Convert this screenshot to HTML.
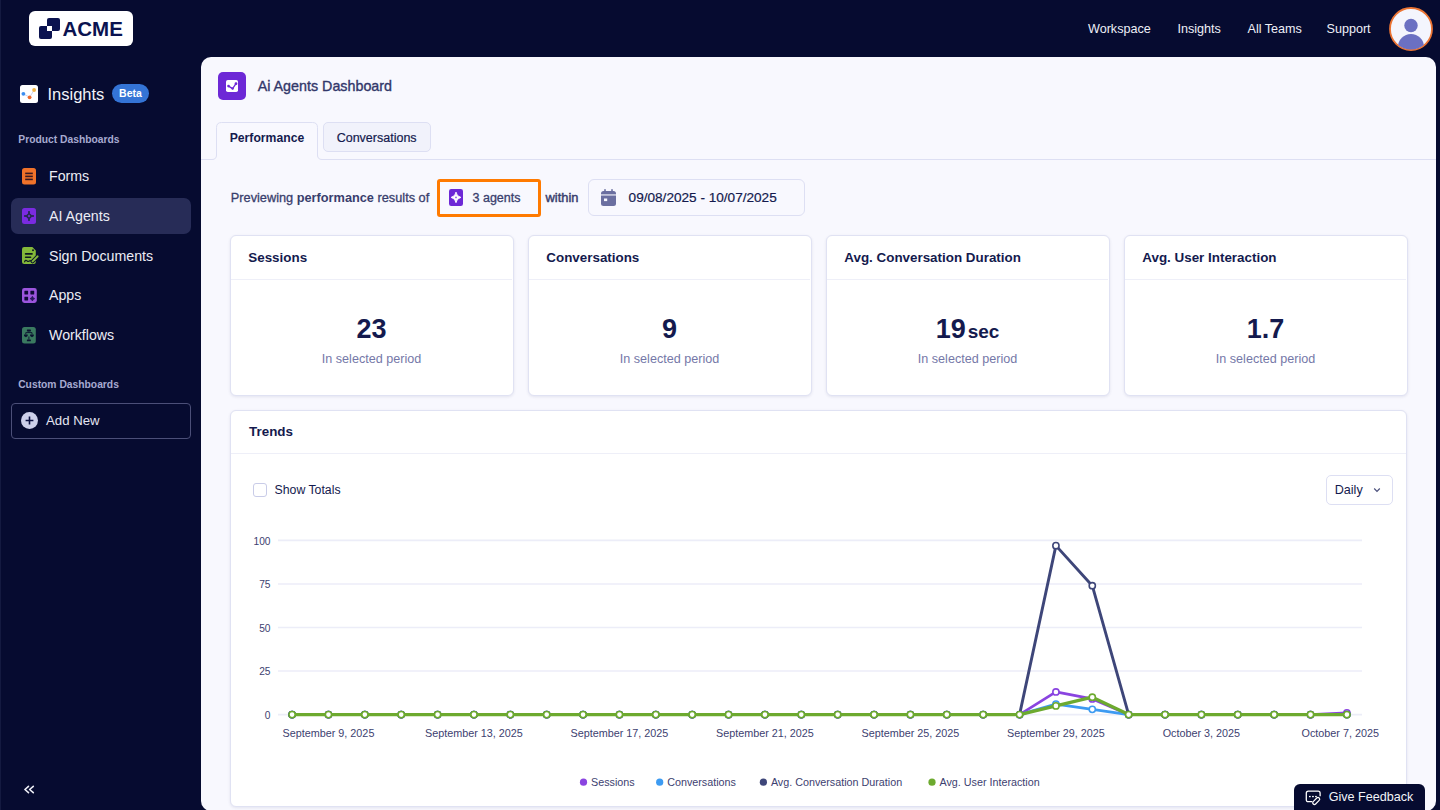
<!DOCTYPE html><html><head><meta charset="utf-8"><style>
html,body{margin:0;padding:0;}
body{width:1440px;height:810px;overflow:hidden;background:#060B30;font-family:"Liberation Sans",sans-serif;position:relative;}
.t{position:absolute;white-space:nowrap;}
.r{position:absolute;box-sizing:border-box;}
svg{position:absolute;overflow:visible;}
</style></head><body>
<div class="r" style="left:0px;top:0px;width:1px;height:810px;background:#141A40;"></div>
<div class="r" style="left:29px;top:11px;width:104px;height:35px;background:#fff;border-radius:6px;"></div>
<div class="r" style="left:39px;top:26px;width:13px;height:13px;background:#0B1350;border-radius:2px;"></div>
<div class="r" style="left:47px;top:18px;width:13px;height:13px;background:#0B1350;border-radius:2px;"></div>
<div class="r" style="left:47px;top:26px;width:5px;height:5px;background:#fff;"></div>
<div class="t " style="left:62.5px;top:18.57px;font-size:20.5px;line-height:20.5px;color:#0B1350;font-weight:bold;letter-spacing:0px;">ACME</div>
<div class="t " style="left:1088px;top:23.29px;font-size:12.6px;line-height:12.6px;color:#EEEFF7;font-weight:normal;">Workspace</div>
<div class="t " style="left:1177.5px;top:23.29px;font-size:12.6px;line-height:12.6px;color:#EEEFF7;font-weight:normal;">Insights</div>
<div class="t " style="left:1247.5px;top:23.29px;font-size:12.6px;line-height:12.6px;color:#EEEFF7;font-weight:normal;">All Teams</div>
<div class="t " style="left:1326.5px;top:23.29px;font-size:12.6px;line-height:12.6px;color:#EEEFF7;font-weight:normal;">Support</div>
<svg style="left:1389px;top:7px" width="44" height="44" viewBox="0 0 44 44">
<defs><clipPath id="avc"><circle cx="22" cy="22" r="20.5"/></clipPath></defs>
<circle cx="22" cy="22" r="21" fill="#F4F5FD" stroke="#EC7433" stroke-width="1.8"/>
<g clip-path="url(#avc)"><circle cx="22" cy="18.5" r="6.7" fill="#6B70C2"/>
<ellipse cx="22" cy="40" rx="13" ry="13" fill="#6B70C2"/></g>
</svg>
<svg style="left:20px;top:85px" width="18" height="18" viewBox="0 0 18 18">
<rect x="0" y="0" width="18" height="18" rx="2.5" fill="#fff"/>
<polyline points="3.4,8.8 9.6,12.3 14.1,5" fill="none" stroke="#C9CBE6" stroke-width="0.9"/>
<circle cx="3.4" cy="8.8" r="1.9" fill="#3B8EF0"/><circle cx="9.6" cy="12.3" r="1.9" fill="#EE6A2C"/><circle cx="14.1" cy="5" r="1.9" fill="#F0B445"/>
</svg>
<div class="t " style="left:47.5px;top:85.97px;font-size:16.5px;line-height:16.5px;color:#F1F2F8;font-weight:normal;">Insights</div>
<div class="r" style="left:112px;top:84px;width:37px;height:19px;background:#3474D6;border-radius:10px;"></div>
<div class="t" style="left:-69.5px;width:400px;text-align:center;top:88.38px;font-size:10.5px;line-height:10.5px;color:#fff;font-weight:bold;">Beta</div>
<div class="t " style="left:18.3px;top:134.94px;font-size:10.3px;line-height:10.3px;color:#A7AAD0;font-weight:bold;">Product Dashboards</div>
<div class="r" style="left:11px;top:198px;width:180px;height:36px;background:#272C57;border-radius:7px;"></div>
<div class="t " style="left:49px;top:169.43px;font-size:14.2px;line-height:14.2px;color:#ECEDF5;font-weight:normal;">Forms</div>
<div class="t " style="left:49px;top:208.93px;font-size:14.2px;line-height:14.2px;color:#ECEDF5;font-weight:normal;">AI Agents</div>
<div class="t " style="left:49px;top:248.93px;font-size:14.2px;line-height:14.2px;color:#ECEDF5;font-weight:normal;">Sign Documents</div>
<div class="t " style="left:49px;top:288.23px;font-size:14.2px;line-height:14.2px;color:#ECEDF5;font-weight:normal;">Apps</div>
<div class="t " style="left:49px;top:328.23px;font-size:14.2px;line-height:14.2px;color:#ECEDF5;font-weight:normal;">Workflows</div>
<svg style="left:22px;top:168px" width="14" height="17" viewBox="0 0 14 17">
<rect width="14" height="16.6" rx="2.5" fill="#F0722A"/>
<rect x="3.2" y="4.6" width="7.6" height="1.6" fill="#3A1A22"/><rect x="3.2" y="7.6" width="7.6" height="1.6" fill="#3A1A22"/><rect x="3.2" y="10.6" width="7.6" height="1.6" fill="#3A1A22"/>
</svg>
<svg style="left:22px;top:208px" width="14" height="16" viewBox="0 0 14 16">
<rect width="14" height="16" rx="2.5" fill="#7A2BE0"/>
<rect x="2.1" y="7.1" width="9.8" height="1.8" fill="#232A4E"/><rect x="6.1" y="3.1" width="1.8" height="9.8" fill="#232A4E"/>
<circle cx="7" cy="8" r="2.6" fill="#232A4E"/><circle cx="7" cy="8" r="1.2" fill="#6E2BC8"/>
</svg>
<svg style="left:22px;top:247px" width="17" height="18" viewBox="0 0 17 18">
<path d="M2.2 0 H10.4 L13.8 3.4 V15 Q13.8 17.1 11.7 17.1 H2.2 Q0 17.1 0 15 V2.2 Q0 0 2.2 0Z" fill="#84B83A"/>
<circle cx="11" cy="3.3" r="1" fill="#0E1A20"/>
<rect x="2.8" y="6" width="8" height="1.7" rx="0.8" fill="#0E1A20"/>
<rect x="2.8" y="9.4" width="6.6" height="1.7" rx="0.8" fill="#0E1A20"/>
<path d="M2.6 14.8 Q3.6 12.4 5 13.8 Q6.4 15.2 8 13.6 L9.6 14.6" fill="none" stroke="#0E1A20" stroke-width="1.2" stroke-linecap="round"/>
<line x1="15.6" y1="9.4" x2="10.6" y2="14.4" stroke="#0B1230" stroke-width="3.8" stroke-linecap="round"/>
<line x1="15.6" y1="9.4" x2="10.6" y2="14.4" stroke="#84B83A" stroke-width="2" stroke-linecap="round"/>
</svg>
<svg style="left:21.7px;top:287.7px" width="15" height="15" viewBox="0 0 15 15">
<rect width="14.8" height="15" rx="2.4" fill="#9B55DD"/>
<rect x="2.4" y="2.7" width="3.7" height="3.7" rx="0.4" fill="#0D0A35"/><rect x="8.4" y="2.7" width="3.8" height="3.7" rx="0.4" fill="#0D0A35"/><rect x="2.4" y="8.7" width="3.7" height="3.8" rx="0.4" fill="#0D0A35"/>
<path d="M10.4 8.7 Q10.8 10.2 12.3 10.6 Q10.8 11 10.4 12.5 Q10 11 8.5 10.6 Q10 10.2 10.4 8.7Z" fill="#2A1A5E" stroke="#2A1A5E" stroke-width="1.2" stroke-linejoin="round"/>
</svg>
<svg style="left:22px;top:326.6px" width="14" height="17" viewBox="0 0 14 17">
<rect width="13.8" height="16.5" rx="2.5" fill="#3A7A60"/>
<rect x="4.9" y="2.5" width="4" height="1.9" rx="0.5" fill="#0B1230"/>
<rect x="4.9" y="12.5" width="4" height="1.8" rx="0.5" fill="#0B1230"/>
<path d="M6.9 4.4 V5.6 M3.8 7.4 V5.6 H10 V7.4 M6.9 9.5 V12.5" stroke="#0B1230" stroke-width="0.9" fill="none"/>
<path d="M2 7.4 H5.7 V9 L3.9 10.3 L2 9Z" fill="#0B1230"/><path d="M8.1 7.4 H11.8 V9 L10 10.3 L8.1 9Z" fill="#0B1230"/>
</svg>
<div class="t " style="left:18.2px;top:379.94px;font-size:10.3px;line-height:10.3px;color:#A7AAD0;font-weight:bold;">Custom Dashboards</div>
<div class="r" style="left:11px;top:403px;width:180px;height:36px;border:1px solid #4B4F78;border-radius:4px;"></div>
<svg style="left:21px;top:412px" width="17" height="17" viewBox="0 0 17 17">
<circle cx="8.5" cy="8.5" r="8.5" fill="#CDD0EA"/><path d="M8.5 4.6 V12.4 M4.6 8.5 H12.4" stroke="#0B1040" stroke-width="1.6"/>
</svg>
<div class="t " style="left:46px;top:414.38px;font-size:13.2px;line-height:13.2px;color:#E4E5F2;font-weight:normal;">Add New</div>
<svg style="left:20px;top:782px" width="20" height="16" viewBox="0 0 20 16"><path d="M8.5 4.3 L4.9 7.5 L8.5 10.7 M13.3 4.3 L9.6 7.5 L13.3 10.7" fill="none" stroke="#EDEEF6" stroke-width="1.6" stroke-linecap="round" stroke-linejoin="round"/></svg>
<div class="r" style="left:201px;top:57px;width:1235px;height:754px;background:#F8F8FE;border-radius:10px;"></div>
<svg style="left:218px;top:72px" width="28" height="28" viewBox="0 0 28 28">
<rect width="28" height="28" rx="5" fill="#6D28D6"/>
<rect x="8" y="8" width="12" height="12" rx="1.8" fill="#fff"/>
<polyline points="10.5,14.1 14.6,16.6 18,11.7" fill="none" stroke="#6D28D6" stroke-width="1.3" stroke-linecap="round" stroke-linejoin="round"/>
<circle cx="10.5" cy="14.1" r="1.3" fill="#6D28D6"/><circle cx="14.6" cy="16.6" r="1.2" fill="#6D28D6"/><circle cx="18" cy="11.7" r="1.4" fill="#6D28D6"/>
</svg>
<div class="t " style="left:257.7px;top:79.05px;font-size:14.3px;line-height:14.3px;color:#32376A;font-weight:normal;-webkit-text-stroke:0.35px #32376A;">Ai Agents Dashboard</div>
<svg style="left:0;top:0" width="1440" height="200" viewBox="0 0 1440 200"><path d="M201 159.5 H212 Q216.5 159.5 216.5 155 V127.5 Q216.5 122.5 221.5 122.5 H312.5 Q317.5 122.5 317.5 127.5 V155 Q317.5 159.5 322 159.5 H1436" fill="none" stroke="#DDDFF3" stroke-width="1"/></svg>
<div class="t " style="left:229.7px;top:131.63px;font-size:12.2px;line-height:12.2px;color:#141A4E;font-weight:bold;">Performance</div>
<div class="r" style="left:323px;top:122px;width:108px;height:30px;background:#F1F2FB;border:1px solid #DDDFF3;border-radius:5px;"></div>
<div class="t " style="left:336.7px;top:131.97px;font-size:12.5px;line-height:12.5px;color:#141A4E;font-weight:normal;-webkit-text-stroke:0.2px #141A4E;">Conversations</div>
<div class="t " style="left:230.8px;top:191.56px;font-size:12.75px;line-height:12.75px;color:#393E6D;font-weight:normal;"><span style="-webkit-text-stroke:0.3px #393E6D">Previewing</span> <b>performance</b> <span style="-webkit-text-stroke:0.3px #393E6D">results of</span></div>
<div class="r" style="left:437px;top:178.5px;width:104px;height:38.5px;border:3.8px solid #FF7A00;border-radius:3px;background:#F8F8FE;"></div>
<svg style="left:449px;top:189px" width="14" height="17" viewBox="0 0 14 17">
<rect width="14" height="17" rx="2.2" fill="#6D28D6"/>
<path d="M7 3.1 Q7.5 7.3 11.9 8.4 Q7.5 9.5 7 13.7 Q6.5 9.5 2.1 8.4 Q6.5 7.3 7 3.1Z" fill="#fff" stroke="#fff" stroke-width="0.9" stroke-linejoin="round"/>
<circle cx="7" cy="8.4" r="0.9" fill="#8E5BE3"/>
</svg>
<div class="t " style="left:472.5px;top:192.38px;font-size:12.5px;line-height:12.5px;color:#393E6D;font-weight:normal;-webkit-text-stroke:0.3px #393E6D;">3 agents</div>
<div class="t " style="left:545.5px;top:191.63px;font-size:12.9px;line-height:12.9px;color:#393E6D;font-weight:normal;-webkit-text-stroke:0.45px #393E6D;">within</div>
<div class="r" style="left:588px;top:179px;width:217px;height:37px;border:1px solid #DDDFF3;border-radius:6px;background:#F8F8FE;"></div>
<svg style="left:601px;top:189px" width="15" height="17" viewBox="0 0 15 17">
<rect x="0" y="2" width="15" height="15" rx="2.5" fill="#6B6FA0"/>
<rect x="3.2" y="0" width="1.6" height="4" rx="0.8" fill="#6B6FA0"/><rect x="10.2" y="0" width="1.6" height="4" rx="0.8" fill="#6B6FA0"/>
<rect x="0" y="5.4" width="15" height="1.1" fill="#F8F8FE"/>
<rect x="3" y="9.5" width="3.2" height="2.6" fill="#F8F8FE"/>
</svg>
<div class="t " style="left:628.6px;top:190.84px;font-size:13.6px;line-height:13.6px;color:#141A4E;font-weight:normal;-webkit-text-stroke:0.2px #141A4E;">09/08/2025 - 10/07/2025</div>
<div class="r" style="left:230px;top:235px;width:284px;height:161px;background:#fff;border:1px solid #E0E2F3;border-radius:6px;box-shadow:0 1px 3px rgba(40,45,110,0.10);"></div>
<div class="r" style="left:231px;top:279px;width:281px;height:1px;background:#EEEFF8;"></div>
<div class="t " style="left:248.3px;top:251.41px;font-size:13.4px;line-height:13.4px;color:#141A4E;font-weight:bold;">Sessions</div>
<div class="t" style="left:171.5px;width:400px;text-align:center;top:315.80px;font-size:27px;line-height:27px;color:#141A4E;font-weight:bold;">23</div>
<div class="t" style="left:171.5px;width:400px;text-align:center;top:352.99px;font-size:12.6px;line-height:12.6px;color:#7578A8;font-weight:normal;">In selected period</div>
<div class="r" style="left:528px;top:235px;width:284px;height:161px;background:#fff;border:1px solid #E0E2F3;border-radius:6px;box-shadow:0 1px 3px rgba(40,45,110,0.10);"></div>
<div class="r" style="left:529px;top:279px;width:281px;height:1px;background:#EEEFF8;"></div>
<div class="t " style="left:546.3px;top:251.41px;font-size:13.4px;line-height:13.4px;color:#141A4E;font-weight:bold;">Conversations</div>
<div class="t" style="left:469.5px;width:400px;text-align:center;top:315.80px;font-size:27px;line-height:27px;color:#141A4E;font-weight:bold;">9</div>
<div class="t" style="left:469.5px;width:400px;text-align:center;top:352.99px;font-size:12.6px;line-height:12.6px;color:#7578A8;font-weight:normal;">In selected period</div>
<div class="r" style="left:826px;top:235px;width:284px;height:161px;background:#fff;border:1px solid #E0E2F3;border-radius:6px;box-shadow:0 1px 3px rgba(40,45,110,0.10);"></div>
<div class="r" style="left:827px;top:279px;width:281px;height:1px;background:#EEEFF8;"></div>
<div class="t " style="left:844.3px;top:251.41px;font-size:13.4px;line-height:13.4px;color:#141A4E;font-weight:bold;">Avg. Conversation Duration</div>
<div class="t" style="left:767.5px;width:400px;text-align:center;top:315.80px;font-size:27px;line-height:27px;color:#141A4E;font-weight:bold;">19<span style="font-size:19px;margin-left:2px">sec</span></div>
<div class="t" style="left:767.5px;width:400px;text-align:center;top:352.99px;font-size:12.6px;line-height:12.6px;color:#7578A8;font-weight:normal;">In selected period</div>
<div class="r" style="left:1124px;top:235px;width:284px;height:161px;background:#fff;border:1px solid #E0E2F3;border-radius:6px;box-shadow:0 1px 3px rgba(40,45,110,0.10);"></div>
<div class="r" style="left:1125px;top:279px;width:281px;height:1px;background:#EEEFF8;"></div>
<div class="t " style="left:1142.3px;top:251.41px;font-size:13.4px;line-height:13.4px;color:#141A4E;font-weight:bold;">Avg. User Interaction</div>
<div class="t" style="left:1065.5px;width:400px;text-align:center;top:315.80px;font-size:27px;line-height:27px;color:#141A4E;font-weight:bold;">1.7</div>
<div class="t" style="left:1065.5px;width:400px;text-align:center;top:352.99px;font-size:12.6px;line-height:12.6px;color:#7578A8;font-weight:normal;">In selected period</div>
<div class="r" style="left:230px;top:410px;width:1177px;height:397px;background:#fff;border:1px solid #E0E2F3;border-radius:6px;box-shadow:0 1px 3px rgba(40,45,110,0.10);"></div>
<div class="r" style="left:231px;top:453px;width:1175px;height:1px;background:#EEEFF8;"></div>
<div class="t " style="left:249.1px;top:425.11px;font-size:13.4px;line-height:13.4px;color:#141A4E;font-weight:bold;">Trends</div>
<div class="r" style="left:252.5px;top:482.5px;width:14px;height:14px;border:1px solid #C9CCE8;border-radius:3px;background:#fff;"></div>
<div class="t " style="left:274.5px;top:483.94px;font-size:12.3px;line-height:12.3px;color:#141A4E;font-weight:normal;">Show Totals</div>
<div class="r" style="left:1326px;top:475px;width:67px;height:30px;border:1px solid #DDDFF3;border-radius:5px;background:#fff;"></div>
<div class="t " style="left:1334.7px;top:484.29px;font-size:12.6px;line-height:12.6px;color:#141A4E;font-weight:normal;">Daily</div>
<svg style="left:1373px;top:487px" width="8" height="6" viewBox="0 0 8 6"><polyline points="1.2,1.5 4,4.3 6.8,1.5" fill="none" stroke="#4A4F7C" stroke-width="1.2"/></svg>
<svg style="left:0;top:0" width="1440" height="810" viewBox="0 0 1440 810">
<line x1="278" y1="714.60" x2="1362" y2="714.60" stroke="#ECEDF8" stroke-width="1.6"/>
<text x="270.5" y="718.70" text-anchor="end" font-family="Liberation Sans" font-size="10.2" fill="#3D4170">0</text>
<line x1="278" y1="671.05" x2="1362" y2="671.05" stroke="#ECEDF8" stroke-width="1.6"/>
<text x="270.5" y="675.15" text-anchor="end" font-family="Liberation Sans" font-size="10.2" fill="#3D4170">25</text>
<line x1="278" y1="627.50" x2="1362" y2="627.50" stroke="#ECEDF8" stroke-width="1.6"/>
<text x="270.5" y="631.60" text-anchor="end" font-family="Liberation Sans" font-size="10.2" fill="#3D4170">50</text>
<line x1="278" y1="583.95" x2="1362" y2="583.95" stroke="#ECEDF8" stroke-width="1.6"/>
<text x="270.5" y="588.05" text-anchor="end" font-family="Liberation Sans" font-size="10.2" fill="#3D4170">75</text>
<line x1="278" y1="540.40" x2="1362" y2="540.40" stroke="#ECEDF8" stroke-width="1.6"/>
<text x="270.5" y="544.50" text-anchor="end" font-family="Liberation Sans" font-size="10.2" fill="#3D4170">100</text>
<text x="328.47" y="736.8" text-anchor="middle" font-family="Liberation Sans" font-size="10.8" fill="#3D4170">September 9, 2025</text>
<text x="473.96" y="736.8" text-anchor="middle" font-family="Liberation Sans" font-size="10.8" fill="#3D4170">September 13, 2025</text>
<text x="619.45" y="736.8" text-anchor="middle" font-family="Liberation Sans" font-size="10.8" fill="#3D4170">September 17, 2025</text>
<text x="764.94" y="736.8" text-anchor="middle" font-family="Liberation Sans" font-size="10.8" fill="#3D4170">September 21, 2025</text>
<text x="910.43" y="736.8" text-anchor="middle" font-family="Liberation Sans" font-size="10.8" fill="#3D4170">September 25, 2025</text>
<text x="1055.92" y="736.8" text-anchor="middle" font-family="Liberation Sans" font-size="10.8" fill="#3D4170">September 29, 2025</text>
<text x="1201.41" y="736.8" text-anchor="middle" font-family="Liberation Sans" font-size="10.8" fill="#3D4170">October 3, 2025</text>
<text x="1379" y="736.8" text-anchor="end" font-family="Liberation Sans" font-size="10.8" fill="#3D4170">October 7, 2025</text>
<polyline points="292.10,714.60 328.47,714.60 364.84,714.60 401.22,714.60 437.59,714.60 473.96,714.60 510.33,714.60 546.71,714.60 583.08,714.60 619.45,714.60 655.82,714.60 692.20,714.60 728.57,714.60 764.94,714.60 801.31,714.60 837.69,714.60 874.06,714.60 910.43,714.60 946.80,714.60 983.18,714.60 1019.55,714.60 1055.92,691.95 1092.29,698.92 1128.67,714.60 1165.04,714.60 1201.41,714.60 1237.78,714.60 1274.16,714.60 1310.53,714.60 1346.90,712.86" fill="none" stroke="#8A44E0" stroke-width="2.7" stroke-linejoin="round"/>
<circle cx="292.10" cy="714.60" r="3.1" fill="#fff" stroke="#8A44E0" stroke-width="1.6"/>
<circle cx="328.47" cy="714.60" r="3.1" fill="#fff" stroke="#8A44E0" stroke-width="1.6"/>
<circle cx="364.84" cy="714.60" r="3.1" fill="#fff" stroke="#8A44E0" stroke-width="1.6"/>
<circle cx="401.22" cy="714.60" r="3.1" fill="#fff" stroke="#8A44E0" stroke-width="1.6"/>
<circle cx="437.59" cy="714.60" r="3.1" fill="#fff" stroke="#8A44E0" stroke-width="1.6"/>
<circle cx="473.96" cy="714.60" r="3.1" fill="#fff" stroke="#8A44E0" stroke-width="1.6"/>
<circle cx="510.33" cy="714.60" r="3.1" fill="#fff" stroke="#8A44E0" stroke-width="1.6"/>
<circle cx="546.71" cy="714.60" r="3.1" fill="#fff" stroke="#8A44E0" stroke-width="1.6"/>
<circle cx="583.08" cy="714.60" r="3.1" fill="#fff" stroke="#8A44E0" stroke-width="1.6"/>
<circle cx="619.45" cy="714.60" r="3.1" fill="#fff" stroke="#8A44E0" stroke-width="1.6"/>
<circle cx="655.82" cy="714.60" r="3.1" fill="#fff" stroke="#8A44E0" stroke-width="1.6"/>
<circle cx="692.20" cy="714.60" r="3.1" fill="#fff" stroke="#8A44E0" stroke-width="1.6"/>
<circle cx="728.57" cy="714.60" r="3.1" fill="#fff" stroke="#8A44E0" stroke-width="1.6"/>
<circle cx="764.94" cy="714.60" r="3.1" fill="#fff" stroke="#8A44E0" stroke-width="1.6"/>
<circle cx="801.31" cy="714.60" r="3.1" fill="#fff" stroke="#8A44E0" stroke-width="1.6"/>
<circle cx="837.69" cy="714.60" r="3.1" fill="#fff" stroke="#8A44E0" stroke-width="1.6"/>
<circle cx="874.06" cy="714.60" r="3.1" fill="#fff" stroke="#8A44E0" stroke-width="1.6"/>
<circle cx="910.43" cy="714.60" r="3.1" fill="#fff" stroke="#8A44E0" stroke-width="1.6"/>
<circle cx="946.80" cy="714.60" r="3.1" fill="#fff" stroke="#8A44E0" stroke-width="1.6"/>
<circle cx="983.18" cy="714.60" r="3.1" fill="#fff" stroke="#8A44E0" stroke-width="1.6"/>
<circle cx="1019.55" cy="714.60" r="3.1" fill="#fff" stroke="#8A44E0" stroke-width="1.6"/>
<circle cx="1055.92" cy="691.95" r="3.1" fill="#fff" stroke="#8A44E0" stroke-width="1.6"/>
<circle cx="1092.29" cy="698.92" r="3.1" fill="#fff" stroke="#8A44E0" stroke-width="1.6"/>
<circle cx="1128.67" cy="714.60" r="3.1" fill="#fff" stroke="#8A44E0" stroke-width="1.6"/>
<circle cx="1165.04" cy="714.60" r="3.1" fill="#fff" stroke="#8A44E0" stroke-width="1.6"/>
<circle cx="1201.41" cy="714.60" r="3.1" fill="#fff" stroke="#8A44E0" stroke-width="1.6"/>
<circle cx="1237.78" cy="714.60" r="3.1" fill="#fff" stroke="#8A44E0" stroke-width="1.6"/>
<circle cx="1274.16" cy="714.60" r="3.1" fill="#fff" stroke="#8A44E0" stroke-width="1.6"/>
<circle cx="1310.53" cy="714.60" r="3.1" fill="#fff" stroke="#8A44E0" stroke-width="1.6"/>
<circle cx="1346.90" cy="712.86" r="3.1" fill="#fff" stroke="#8A44E0" stroke-width="1.6"/>
<polyline points="292.10,714.60 328.47,714.60 364.84,714.60 401.22,714.60 437.59,714.60 473.96,714.60 510.33,714.60 546.71,714.60 583.08,714.60 619.45,714.60 655.82,714.60 692.20,714.60 728.57,714.60 764.94,714.60 801.31,714.60 837.69,714.60 874.06,714.60 910.43,714.60 946.80,714.60 983.18,714.60 1019.55,714.60 1055.92,704.15 1092.29,709.37 1128.67,714.60 1165.04,714.60 1201.41,714.60 1237.78,714.60 1274.16,714.60 1310.53,714.60 1346.90,714.60" fill="none" stroke="#3D9BF2" stroke-width="2.7" stroke-linejoin="round"/>
<circle cx="292.10" cy="714.60" r="3.1" fill="#fff" stroke="#3D9BF2" stroke-width="1.6"/>
<circle cx="328.47" cy="714.60" r="3.1" fill="#fff" stroke="#3D9BF2" stroke-width="1.6"/>
<circle cx="364.84" cy="714.60" r="3.1" fill="#fff" stroke="#3D9BF2" stroke-width="1.6"/>
<circle cx="401.22" cy="714.60" r="3.1" fill="#fff" stroke="#3D9BF2" stroke-width="1.6"/>
<circle cx="437.59" cy="714.60" r="3.1" fill="#fff" stroke="#3D9BF2" stroke-width="1.6"/>
<circle cx="473.96" cy="714.60" r="3.1" fill="#fff" stroke="#3D9BF2" stroke-width="1.6"/>
<circle cx="510.33" cy="714.60" r="3.1" fill="#fff" stroke="#3D9BF2" stroke-width="1.6"/>
<circle cx="546.71" cy="714.60" r="3.1" fill="#fff" stroke="#3D9BF2" stroke-width="1.6"/>
<circle cx="583.08" cy="714.60" r="3.1" fill="#fff" stroke="#3D9BF2" stroke-width="1.6"/>
<circle cx="619.45" cy="714.60" r="3.1" fill="#fff" stroke="#3D9BF2" stroke-width="1.6"/>
<circle cx="655.82" cy="714.60" r="3.1" fill="#fff" stroke="#3D9BF2" stroke-width="1.6"/>
<circle cx="692.20" cy="714.60" r="3.1" fill="#fff" stroke="#3D9BF2" stroke-width="1.6"/>
<circle cx="728.57" cy="714.60" r="3.1" fill="#fff" stroke="#3D9BF2" stroke-width="1.6"/>
<circle cx="764.94" cy="714.60" r="3.1" fill="#fff" stroke="#3D9BF2" stroke-width="1.6"/>
<circle cx="801.31" cy="714.60" r="3.1" fill="#fff" stroke="#3D9BF2" stroke-width="1.6"/>
<circle cx="837.69" cy="714.60" r="3.1" fill="#fff" stroke="#3D9BF2" stroke-width="1.6"/>
<circle cx="874.06" cy="714.60" r="3.1" fill="#fff" stroke="#3D9BF2" stroke-width="1.6"/>
<circle cx="910.43" cy="714.60" r="3.1" fill="#fff" stroke="#3D9BF2" stroke-width="1.6"/>
<circle cx="946.80" cy="714.60" r="3.1" fill="#fff" stroke="#3D9BF2" stroke-width="1.6"/>
<circle cx="983.18" cy="714.60" r="3.1" fill="#fff" stroke="#3D9BF2" stroke-width="1.6"/>
<circle cx="1019.55" cy="714.60" r="3.1" fill="#fff" stroke="#3D9BF2" stroke-width="1.6"/>
<circle cx="1055.92" cy="704.15" r="3.1" fill="#fff" stroke="#3D9BF2" stroke-width="1.6"/>
<circle cx="1092.29" cy="709.37" r="3.1" fill="#fff" stroke="#3D9BF2" stroke-width="1.6"/>
<circle cx="1128.67" cy="714.60" r="3.1" fill="#fff" stroke="#3D9BF2" stroke-width="1.6"/>
<circle cx="1165.04" cy="714.60" r="3.1" fill="#fff" stroke="#3D9BF2" stroke-width="1.6"/>
<circle cx="1201.41" cy="714.60" r="3.1" fill="#fff" stroke="#3D9BF2" stroke-width="1.6"/>
<circle cx="1237.78" cy="714.60" r="3.1" fill="#fff" stroke="#3D9BF2" stroke-width="1.6"/>
<circle cx="1274.16" cy="714.60" r="3.1" fill="#fff" stroke="#3D9BF2" stroke-width="1.6"/>
<circle cx="1310.53" cy="714.60" r="3.1" fill="#fff" stroke="#3D9BF2" stroke-width="1.6"/>
<circle cx="1346.90" cy="714.60" r="3.1" fill="#fff" stroke="#3D9BF2" stroke-width="1.6"/>
<polyline points="292.10,714.60 328.47,714.60 364.84,714.60 401.22,714.60 437.59,714.60 473.96,714.60 510.33,714.60 546.71,714.60 583.08,714.60 619.45,714.60 655.82,714.60 692.20,714.60 728.57,714.60 764.94,714.60 801.31,714.60 837.69,714.60 874.06,714.60 910.43,714.60 946.80,714.60 983.18,714.60 1019.55,714.60 1055.92,545.63 1092.29,585.69 1128.67,714.60 1165.04,714.60 1201.41,714.60 1237.78,714.60 1274.16,714.60 1310.53,714.60 1346.90,714.60" fill="none" stroke="#3E4679" stroke-width="2.9" stroke-linejoin="round"/>
<circle cx="292.10" cy="714.60" r="3.1" fill="#fff" stroke="#3E4679" stroke-width="1.6"/>
<circle cx="328.47" cy="714.60" r="3.1" fill="#fff" stroke="#3E4679" stroke-width="1.6"/>
<circle cx="364.84" cy="714.60" r="3.1" fill="#fff" stroke="#3E4679" stroke-width="1.6"/>
<circle cx="401.22" cy="714.60" r="3.1" fill="#fff" stroke="#3E4679" stroke-width="1.6"/>
<circle cx="437.59" cy="714.60" r="3.1" fill="#fff" stroke="#3E4679" stroke-width="1.6"/>
<circle cx="473.96" cy="714.60" r="3.1" fill="#fff" stroke="#3E4679" stroke-width="1.6"/>
<circle cx="510.33" cy="714.60" r="3.1" fill="#fff" stroke="#3E4679" stroke-width="1.6"/>
<circle cx="546.71" cy="714.60" r="3.1" fill="#fff" stroke="#3E4679" stroke-width="1.6"/>
<circle cx="583.08" cy="714.60" r="3.1" fill="#fff" stroke="#3E4679" stroke-width="1.6"/>
<circle cx="619.45" cy="714.60" r="3.1" fill="#fff" stroke="#3E4679" stroke-width="1.6"/>
<circle cx="655.82" cy="714.60" r="3.1" fill="#fff" stroke="#3E4679" stroke-width="1.6"/>
<circle cx="692.20" cy="714.60" r="3.1" fill="#fff" stroke="#3E4679" stroke-width="1.6"/>
<circle cx="728.57" cy="714.60" r="3.1" fill="#fff" stroke="#3E4679" stroke-width="1.6"/>
<circle cx="764.94" cy="714.60" r="3.1" fill="#fff" stroke="#3E4679" stroke-width="1.6"/>
<circle cx="801.31" cy="714.60" r="3.1" fill="#fff" stroke="#3E4679" stroke-width="1.6"/>
<circle cx="837.69" cy="714.60" r="3.1" fill="#fff" stroke="#3E4679" stroke-width="1.6"/>
<circle cx="874.06" cy="714.60" r="3.1" fill="#fff" stroke="#3E4679" stroke-width="1.6"/>
<circle cx="910.43" cy="714.60" r="3.1" fill="#fff" stroke="#3E4679" stroke-width="1.6"/>
<circle cx="946.80" cy="714.60" r="3.1" fill="#fff" stroke="#3E4679" stroke-width="1.6"/>
<circle cx="983.18" cy="714.60" r="3.1" fill="#fff" stroke="#3E4679" stroke-width="1.6"/>
<circle cx="1019.55" cy="714.60" r="3.1" fill="#fff" stroke="#3E4679" stroke-width="1.6"/>
<circle cx="1055.92" cy="545.63" r="3.1" fill="#fff" stroke="#3E4679" stroke-width="1.6"/>
<circle cx="1092.29" cy="585.69" r="3.1" fill="#fff" stroke="#3E4679" stroke-width="1.6"/>
<circle cx="1128.67" cy="714.60" r="3.1" fill="#fff" stroke="#3E4679" stroke-width="1.6"/>
<circle cx="1165.04" cy="714.60" r="3.1" fill="#fff" stroke="#3E4679" stroke-width="1.6"/>
<circle cx="1201.41" cy="714.60" r="3.1" fill="#fff" stroke="#3E4679" stroke-width="1.6"/>
<circle cx="1237.78" cy="714.60" r="3.1" fill="#fff" stroke="#3E4679" stroke-width="1.6"/>
<circle cx="1274.16" cy="714.60" r="3.1" fill="#fff" stroke="#3E4679" stroke-width="1.6"/>
<circle cx="1310.53" cy="714.60" r="3.1" fill="#fff" stroke="#3E4679" stroke-width="1.6"/>
<circle cx="1346.90" cy="714.60" r="3.1" fill="#fff" stroke="#3E4679" stroke-width="1.6"/>
<polyline points="292.10,714.60 328.47,714.60 364.84,714.60 401.22,714.60 437.59,714.60 473.96,714.60 510.33,714.60 546.71,714.60 583.08,714.60 619.45,714.60 655.82,714.60 692.20,714.60 728.57,714.60 764.94,714.60 801.31,714.60 837.69,714.60 874.06,714.60 910.43,714.60 946.80,714.60 983.18,714.60 1019.55,714.60 1055.92,705.89 1092.29,697.18 1128.67,714.60 1165.04,714.60 1201.41,714.60 1237.78,714.60 1274.16,714.60 1310.53,714.60 1346.90,714.60" fill="none" stroke="#6DAA2F" stroke-width="3.3" stroke-linejoin="round"/>
<circle cx="292.10" cy="714.60" r="3.1" fill="#fff" stroke="#6DAA2F" stroke-width="1.6"/>
<circle cx="328.47" cy="714.60" r="3.1" fill="#fff" stroke="#6DAA2F" stroke-width="1.6"/>
<circle cx="364.84" cy="714.60" r="3.1" fill="#fff" stroke="#6DAA2F" stroke-width="1.6"/>
<circle cx="401.22" cy="714.60" r="3.1" fill="#fff" stroke="#6DAA2F" stroke-width="1.6"/>
<circle cx="437.59" cy="714.60" r="3.1" fill="#fff" stroke="#6DAA2F" stroke-width="1.6"/>
<circle cx="473.96" cy="714.60" r="3.1" fill="#fff" stroke="#6DAA2F" stroke-width="1.6"/>
<circle cx="510.33" cy="714.60" r="3.1" fill="#fff" stroke="#6DAA2F" stroke-width="1.6"/>
<circle cx="546.71" cy="714.60" r="3.1" fill="#fff" stroke="#6DAA2F" stroke-width="1.6"/>
<circle cx="583.08" cy="714.60" r="3.1" fill="#fff" stroke="#6DAA2F" stroke-width="1.6"/>
<circle cx="619.45" cy="714.60" r="3.1" fill="#fff" stroke="#6DAA2F" stroke-width="1.6"/>
<circle cx="655.82" cy="714.60" r="3.1" fill="#fff" stroke="#6DAA2F" stroke-width="1.6"/>
<circle cx="692.20" cy="714.60" r="3.1" fill="#fff" stroke="#6DAA2F" stroke-width="1.6"/>
<circle cx="728.57" cy="714.60" r="3.1" fill="#fff" stroke="#6DAA2F" stroke-width="1.6"/>
<circle cx="764.94" cy="714.60" r="3.1" fill="#fff" stroke="#6DAA2F" stroke-width="1.6"/>
<circle cx="801.31" cy="714.60" r="3.1" fill="#fff" stroke="#6DAA2F" stroke-width="1.6"/>
<circle cx="837.69" cy="714.60" r="3.1" fill="#fff" stroke="#6DAA2F" stroke-width="1.6"/>
<circle cx="874.06" cy="714.60" r="3.1" fill="#fff" stroke="#6DAA2F" stroke-width="1.6"/>
<circle cx="910.43" cy="714.60" r="3.1" fill="#fff" stroke="#6DAA2F" stroke-width="1.6"/>
<circle cx="946.80" cy="714.60" r="3.1" fill="#fff" stroke="#6DAA2F" stroke-width="1.6"/>
<circle cx="983.18" cy="714.60" r="3.1" fill="#fff" stroke="#6DAA2F" stroke-width="1.6"/>
<circle cx="1019.55" cy="714.60" r="3.1" fill="#fff" stroke="#6DAA2F" stroke-width="1.6"/>
<circle cx="1055.92" cy="705.89" r="3.1" fill="#fff" stroke="#6DAA2F" stroke-width="1.6"/>
<circle cx="1092.29" cy="697.18" r="3.1" fill="#fff" stroke="#6DAA2F" stroke-width="1.6"/>
<circle cx="1128.67" cy="714.60" r="3.1" fill="#fff" stroke="#6DAA2F" stroke-width="1.6"/>
<circle cx="1165.04" cy="714.60" r="3.1" fill="#fff" stroke="#6DAA2F" stroke-width="1.6"/>
<circle cx="1201.41" cy="714.60" r="3.1" fill="#fff" stroke="#6DAA2F" stroke-width="1.6"/>
<circle cx="1237.78" cy="714.60" r="3.1" fill="#fff" stroke="#6DAA2F" stroke-width="1.6"/>
<circle cx="1274.16" cy="714.60" r="3.1" fill="#fff" stroke="#6DAA2F" stroke-width="1.6"/>
<circle cx="1310.53" cy="714.60" r="3.1" fill="#fff" stroke="#6DAA2F" stroke-width="1.6"/>
<circle cx="1346.90" cy="714.60" r="3.1" fill="#fff" stroke="#6DAA2F" stroke-width="1.6"/>
<circle cx="583.5" cy="782.2" r="3.6" fill="#8A44E0"/>
<text x="591.0" y="786" font-family="Liberation Sans" font-size="10.75" fill="#3D4170">Sessions</text>
<circle cx="659.7" cy="782.2" r="3.6" fill="#3D9BF2"/>
<text x="667.2" y="786" font-family="Liberation Sans" font-size="10.75" fill="#3D4170">Conversations</text>
<circle cx="763.4" cy="782.2" r="3.6" fill="#3E4679"/>
<text x="770.9" y="786" font-family="Liberation Sans" font-size="10.75" fill="#3D4170">Avg. Conversation Duration</text>
<circle cx="932" cy="782.2" r="3.6" fill="#6DAA2F"/>
<text x="939.5" y="786" font-family="Liberation Sans" font-size="10.75" fill="#3D4170">Avg. User Interaction</text>
</svg>
<div class="r" style="left:1294px;top:784px;width:131px;height:30px;background:#060B30;border-radius:6px 6px 0 0;"></div>
<svg style="left:1305px;top:790px" width="18" height="16" viewBox="0 0 18 16">
<path d="M7.4 11.7 H3.3 Q1.3 11.7 1.3 9.7 V3.2 Q1.3 1.2 3.3 1.2 H13.1 Q15.1 1.2 15.1 3.2 V6.2" fill="none" stroke="#fff" stroke-width="1.3"/>
<rect x="4" y="5.9" width="1.7" height="1.3" fill="#fff"/><rect x="7.1" y="5.9" width="1.7" height="1.3" fill="#fff"/><rect x="10.1" y="5.9" width="1.7" height="1.3" fill="#fff"/>
<g transform="rotate(-45 11.2 11)"><rect x="7" y="9.3" width="8.4" height="3.4" rx="1.7" fill="#060B30" stroke="#fff" stroke-width="1.2"/></g>
</svg>
<div class="t " style="left:1328.7px;top:790.99px;font-size:12.6px;line-height:12.6px;color:#F2F3F8;font-weight:normal;">Give Feedback</div>
</body></html>
